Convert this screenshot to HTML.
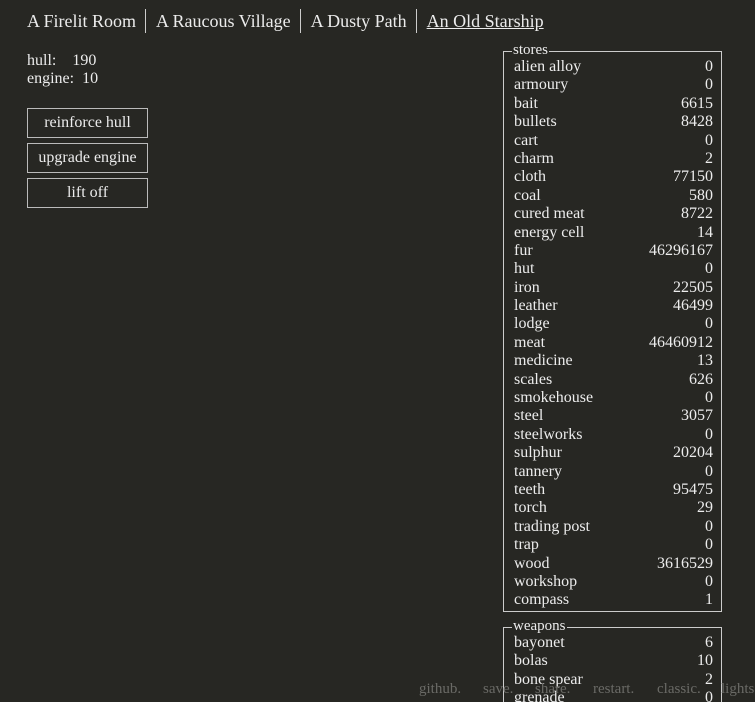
<!DOCTYPE html>
<html><head><style>
html,body{margin:0;height:702px;overflow:hidden}
body{background:#272723;color:#ececec;font-family:"Liberation Serif",serif;width:755px;position:relative}
.a{position:absolute;white-space:nowrap}
.nav{top:9px;left:27px;font-size:18px;line-height:24px}
.nav span{display:inline-block;padding:0 9px 0 10px;border-left:1px solid #ccc}
.nav span:first-child{padding-left:0;border:none}
.nav span:last-child{text-decoration:underline}
.btn{position:absolute;left:27px;width:119px;height:28px;border:1px solid #bbb;text-align:center;font-size:16px;line-height:28px}
.box{position:absolute;left:503px;width:219px;border:1px solid #ccc}
.lg{position:absolute;top:-10px;left:8px;background:#272723;font-size:15px;line-height:16px;padding:0 1px}
.row{height:18.4px;line-height:18.4px;font-size:16px;padding:0 8px 0 10px;display:flex;justify-content:space-between}
.ft{color:#6a6a66;font-size:15px;top:681px}
</style></head><body>
<div class="a nav"><span>A Firelit Room</span><span>A Raucous Village</span><span>A Dusty Path</span><span>An Old Starship</span></div>
<div class="a" style="left:27px;top:52px;font-size:16px;line-height:18px">hull:&nbsp;&nbsp;&nbsp; 190<br>engine:&nbsp; 10</div>
<div class="btn" style="top:108px">reinforce hull</div>
<div class="btn" style="top:143px">upgrade engine</div>
<div class="btn" style="top:178px">lift off</div>
<div class="box" style="top:51px;height:561px;padding-top:6px;box-sizing:border-box">
<div class="lg">stores</div>
<div class="row"><span>alien alloy</span><span>0</span></div>
<div class="row"><span>armoury</span><span>0</span></div>
<div class="row"><span>bait</span><span>6615</span></div>
<div class="row"><span>bullets</span><span>8428</span></div>
<div class="row"><span>cart</span><span>0</span></div>
<div class="row"><span>charm</span><span>2</span></div>
<div class="row"><span>cloth</span><span>77150</span></div>
<div class="row"><span>coal</span><span>580</span></div>
<div class="row"><span>cured meat</span><span>8722</span></div>
<div class="row"><span>energy cell</span><span>14</span></div>
<div class="row"><span>fur</span><span>46296167</span></div>
<div class="row"><span>hut</span><span>0</span></div>
<div class="row"><span>iron</span><span>22505</span></div>
<div class="row"><span>leather</span><span>46499</span></div>
<div class="row"><span>lodge</span><span>0</span></div>
<div class="row"><span>meat</span><span>46460912</span></div>
<div class="row"><span>medicine</span><span>13</span></div>
<div class="row"><span>scales</span><span>626</span></div>
<div class="row"><span>smokehouse</span><span>0</span></div>
<div class="row"><span>steel</span><span>3057</span></div>
<div class="row"><span>steelworks</span><span>0</span></div>
<div class="row"><span>sulphur</span><span>20204</span></div>
<div class="row"><span>tannery</span><span>0</span></div>
<div class="row"><span>teeth</span><span>95475</span></div>
<div class="row"><span>torch</span><span>29</span></div>
<div class="row"><span>trading post</span><span>0</span></div>
<div class="row"><span>trap</span><span>0</span></div>
<div class="row"><span>wood</span><span>3616529</span></div>
<div class="row"><span>workshop</span><span>0</span></div>
<div class="row"><span>compass</span><span>1</span></div>
</div>
<div class="box" style="top:627px;height:100px;padding-top:6px;box-sizing:border-box">
<div class="lg">weapons</div>
<div class="row"><span>bayonet</span><span>6</span></div>
<div class="row"><span>bolas</span><span>10</span></div>
<div class="row"><span>bone spear</span><span>2</span></div>
<div class="row"><span>grenade</span><span>0</span></div>
</div>
<div class="a ft" style="left:419px">github.</div>
<div class="a ft" style="left:483px">save.</div>
<div class="a ft" style="left:535px">share.</div>
<div class="a ft" style="left:593px">restart.</div>
<div class="a ft" style="left:657px">classic.</div>
<div class="a ft" style="left:721px">lights</div>
</body></html>
